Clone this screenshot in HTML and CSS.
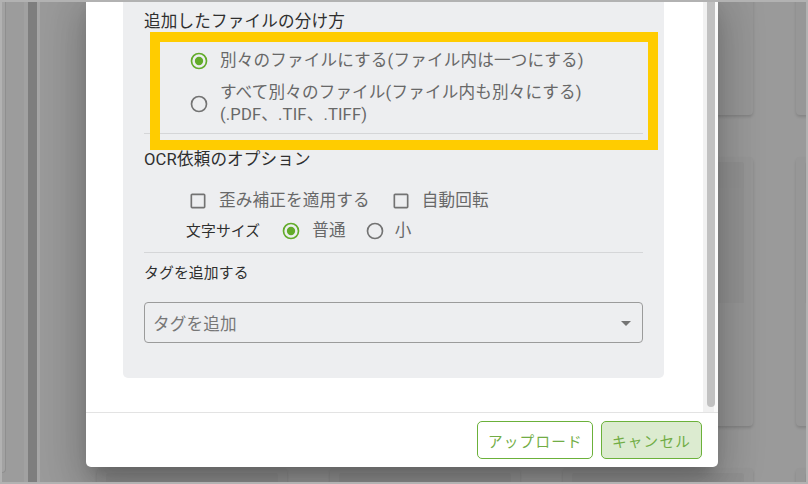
FILE: index.html
```html
<!DOCTYPE html>
<html lang="ja">
<head>
<meta charset="utf-8">
<title>アップロード</title>
<link rel="stylesheet" href="styles.css">
</head>
<body>
<div class="frame">
  <div class="page">
    <aside class="rail">
      <div class="rail-card"></div>
    </aside>
    <main class="board">
      <div class="card"></div><div class="card"></div><div class="card"></div><div class="card"></div>
      <div class="card"><div class="card-head"></div><div class="card-thumb"></div></div>
      <div class="card"><div class="card-head"></div><div class="card-thumb"></div></div>
      <div class="card"><div class="card-head"></div><div class="card-thumb"></div></div>
      <div class="card"><div class="card-head"></div><div class="card-thumb"></div></div>
      <div class="card"><div class="card-head"></div></div>
      <div class="card"><div class="card-head"></div></div>
      <div class="card"><div class="card-head"></div></div>
      <div class="card"><div class="card-head"></div></div>
    </main>
  </div>

  <div class="modal">
    <div class="modal-body">
      <div class="modal-content">
        <div class="panel">
          <div class="section-title">追加したファイルの分け方</div>
          <div class="options">
            <div class="opt-row first">
              <svg class="ico on" viewBox="0 0 24 24"><path d="M12,20A8,8 0 0,1 4,12A8,8 0 0,1 12,4A8,8 0 0,1 20,12A8,8 0 0,1 12,20M12,2A10,10 0 0,0 2,12A10,10 0 0,0 12,22A10,10 0 0,0 22,12A10,10 0 0,0 12,2M12,7A5,5 0 0,0 7,12A5,5 0 0,0 12,17A5,5 0 0,0 17,12A5,5 0 0,0 12,7Z"/></svg>
              <span class="opt-label">別々のファイルにする(ファイル内は一つにする)</span>
            </div>
            <div class="opt-row second">
              <svg class="ico" viewBox="0 0 24 24"><path d="M12,20A8,8 0 0,1 4,12A8,8 0 0,1 12,4A8,8 0 0,1 20,12A8,8 0 0,1 12,20M12,2A10,10 0 0,0 2,12A10,10 0 0,0 12,22A10,10 0 0,0 22,12A10,10 0 0,0 12,2Z"/></svg>
              <span class="opt-label multi">すべて別々のファイル(ファイル内も別々にする)<br>(.PDF、.TIF、.TIFF)</span>
            </div>
          </div>
          <div class="rule first-rule"></div>
          <div class="section-title ocr">OCR依頼のオプション</div>
          <div class="check-row">
            <svg class="ico" viewBox="0 0 24 24"><path d="M19,3H5C3.89,3 3,3.89 3,5V19A2,2 0 0,0 5,21H19A2,2 0 0,0 21,19V5C21,3.89 20.1,3 19,3M19,5V19H5V5H19Z"/></svg>
            <span class="opt-label">歪み補正を適用する</span>
            <svg class="ico gap" viewBox="0 0 24 24"><path d="M19,3H5C3.89,3 3,3.89 3,5V19A2,2 0 0,0 5,21H19A2,2 0 0,0 21,19V5C21,3.89 20.1,3 19,3M19,5V19H5V5H19Z"/></svg>
            <span class="opt-label">自動回転</span>
          </div>
          <div class="size-row">
            <span class="size-label">文字サイズ</span>
            <svg class="ico on gap" viewBox="0 0 24 24"><path d="M12,20A8,8 0 0,1 4,12A8,8 0 0,1 12,4A8,8 0 0,1 20,12A8,8 0 0,1 12,20M12,2A10,10 0 0,0 2,12A10,10 0 0,0 12,22A10,10 0 0,0 22,12A10,10 0 0,0 12,2M12,7A5,5 0 0,0 7,12A5,5 0 0,0 12,17A5,5 0 0,0 17,12A5,5 0 0,0 12,7Z"/></svg>
            <span class="opt-label">普通</span>
            <svg class="ico gap-s" viewBox="0 0 24 24"><path d="M12,20A8,8 0 0,1 4,12A8,8 0 0,1 12,4A8,8 0 0,1 20,12A8,8 0 0,1 12,20M12,2A10,10 0 0,0 2,12A10,10 0 0,0 12,22A10,10 0 0,0 22,12A10,10 0 0,0 12,2Z"/></svg>
            <span class="opt-label small">小</span>
          </div>
          <div class="rule second-rule"></div>
          <div class="tag-title">タグを追加する</div>
          <div class="select">
            <span class="placeholder">タグを追加</span>
            <svg class="caret" viewBox="0 0 24 24"><path d="M7,10L12,15L17,10H7Z"/></svg>
          </div>
        </div>
      </div>
      <div class="scrollbar"><div class="thumb"></div></div>
    </div>
    <div class="modal-footer">
      <button class="btn outline">アップロード</button>
      <button class="btn tonal">キャンセル</button>
    </div>
  </div>

  <div class="highlight"></div>
</div>
</body>
</html>
```

FILE: styles.css
```css
html, body {
  margin: 0;
  padding: 0;
  background: #9a9a9a;
}

body {
  font-family: "Roboto", "Noto Sans CJK JP", sans-serif;
}

.frame {
  position: relative;
  width: 808px;
  height: 484px;
  box-sizing: border-box;
  border: 2px solid #b2b2b2;
  overflow: hidden;
  background: #9a9a9a;
}

/* background page */
.page {
  display: flex;
  height: 100%;
}

.rail {
  flex: none;
  width: 38px;
  height: 100%;
  background: linear-gradient(to right,
    #9c9c9c 0, #9c9c9c 22px,
    #a1a1a1 22px, #a1a1a1 26px,
    #7e7e7e 26px, #7e7e7e 35px,
    #a6a6a6 35px, #a6a6a6 38px);
}

.rail-card {
  width: 3px;
  height: 470px;
  background: #a2a2a2;
  border-right: 1px solid #8f8f8f;
  border-bottom: 1px solid #8f8f8f;
  border-bottom-right-radius: 4px;
}

.board {
  flex: none;
  display: grid;
  grid-template-columns: repeat(4, 190px);
  grid-auto-rows: 269px;
  column-gap: 43px;
  row-gap: 42px;
  margin-left: 57px;
  margin-top: -156px;
}

.card {
  background: #979797;
  border-radius: 4px;
  box-shadow: 0 2px 3px rgba(0, 0, 0, 0.14);
  padding: 5px 9px 0;
  box-sizing: border-box;
}

.card-head {
  height: 26px;
  background: #929292;
  border-radius: 3px 3px 0 0;
}

.card-thumb {
  height: 115px;
  background: #939393;
}

/* modal dialog (overlay) */
.modal {
  position: absolute;
  left: 84px;
  top: -10px;
  width: 632px;
  background: #ffffff;
  border-radius: 0 0 5px 5px;
  box-shadow: 0 11px 15px -7px rgba(0, 0, 0, 0.2),
              0 24px 38px 3px rgba(0, 0, 0, 0.14),
              0 9px 46px 8px rgba(0, 0, 0, 0.12);
  display: flex;
  flex-direction: column;
}

.modal-body {
  display: flex;
  height: 420px;
}

.modal-content {
  flex: 1;
  padding: 0 39px 0 37px;
}

.scrollbar {
  flex: none;
  width: 15px;
  background: linear-gradient(to right, #f1f1f1 0, #f1f1f1 11px, #fafafa 11px);
  padding-left: 4px;
  box-sizing: border-box;
}

.thumb {
  width: 8px;
  height: 415px;
  background: #c1c1c1;
  border-radius: 0 0 4px 4px;
}

.panel {
  background: #edeef0;
  border-radius: 0 0 5px 5px;
  padding: 18px 21px 35px;
}

.section-title {
  font-size: 16.6px;
  line-height: 24px;
  color: #2f2f2f;
  letter-spacing: 0.15px;
}

.options {
  margin-top: 16px;
  margin-left: 45px;
}

.opt-row {
  display: flex;
  align-items: center;
}

.opt-row.second {
  margin-top: 10px;
}

.ico {
  flex: none;
  width: 20px;
  height: 20px;
  fill: #737373;
}

.ico.on {
  fill: #62ab2a;
}

.opt-label {
  margin-left: 11px;
  font-size: 16.6px;
  line-height: 22px;
  color: #686868;
  letter-spacing: 0.15px;
  white-space: nowrap;
}

.opt-label.multi {
  line-height: 21.5px;
}

.rule {
  height: 1px;
  background: #d5d6d8;
}

.first-rule {
  margin-top: 8px;
}

.section-title.ocr {
  margin-top: 14px;
}

.check-row {
  display: flex;
  align-items: center;
  margin-top: 17px;
  margin-left: 44px;
  height: 24px;
}

.check-row .opt-label {
  margin-left: 11px;
}

.ico.gap {
  margin-left: 21px;
}

.size-row {
  display: flex;
  align-items: center;
  margin-top: 6px;
  margin-left: 42px;
  height: 24px;
}

.size-label {
  font-size: 14.8px;
  line-height: 24px;
  color: #2f2f2f;
  letter-spacing: 0.15px;
}

.size-row .opt-label {
  margin-left: 11px;
}

.size-row .opt-label.small {
  margin-left: 10px;
}

.ico.gap-s {
  margin-left: 19px;
}

.second-rule {
  margin-top: 9px;
}

.tag-title {
  margin-top: 10px;
  font-size: 14.8px;
  line-height: 20px;
  color: #2f2f2f;
  letter-spacing: 0.15px;
}

.select {
  margin-top: 19px;
  height: 41px;
  box-sizing: border-box;
  border: 1px solid #9b9b9b;
  border-radius: 4px;
  display: flex;
  align-items: center;
  justify-content: space-between;
  padding: 0 4px 0 8px;
}

.placeholder {
  font-size: 16.6px;
  color: #777777;
  letter-spacing: 0.15px;
}

.caret {
  width: 24px;
  height: 24px;
  fill: #747474;
}

.modal-footer {
  border-top: 1px solid #e3e3e3;
  height: 54px;
  box-sizing: content-box;
  display: flex;
  justify-content: flex-end;
  align-items: flex-start;
  padding-right: 16px;
}

.btn {
  margin-top: 8px;
  height: 38px;
  padding: 0 10px;
  box-sizing: border-box;
  white-space: nowrap;
  font-family: "Roboto", "Noto Sans CJK JP", sans-serif;
  font-size: 14.6px;
  letter-spacing: 1.2px;
  color: #72ad45;
  border: 1px solid #6bb13a;
  border-radius: 5px;
  background: #ffffff;
}

.btn.outline {
  width: 116px;
}

.btn.tonal {
  width: 101px;
  margin-left: 8px;
  background: #dcebd0;
}

/* annotation highlight overlay */
.highlight {
  position: absolute;
  left: 148px;
  top: 30px;
  width: 508px;
  height: 118px;
  box-sizing: border-box;
  border: 10px solid #ffcc00;
}
```
